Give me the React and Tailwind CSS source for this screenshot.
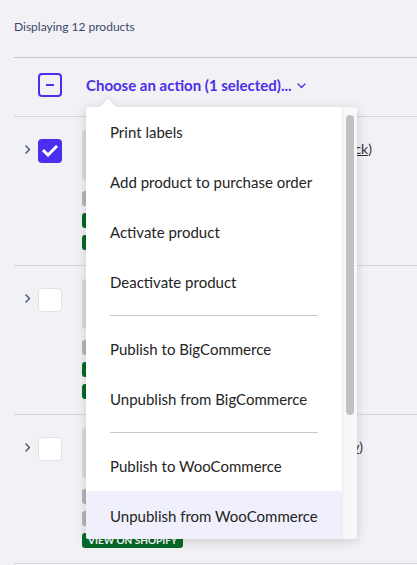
import React from "react";

const Chevron = () => (
  <svg width="6" height="9" viewBox="0 0 6 9" fill="none">
    <path d="M1 1l3.5 3.5L1 8" stroke="#3c4f74" strokeWidth="1.4" strokeLinecap="round" strokeLinejoin="round" />
  </svg>
);

const Box = ({ checked }) =>
  checked ? (
    <div className="w-[24px] h-[24px] rounded-[4px] bg-[#4b2ff0] flex items-center justify-center">
      <svg width="16" height="12" viewBox="0 0 16 12" fill="none">
        <path d="M2 6.2l4 3.8L14 2" stroke="#fff" strokeWidth="3" strokeLinecap="square" />
      </svg>
    </div>
  ) : (
    <div className="w-[24px] h-[24px] rounded-[4px] bg-white border border-[#e2e1e6]" />
  );

const Badge = ({ green, children }) => (
  <span
    className={
      "inline-block rounded-[3px] px-[6px] h-[15px] leading-[15px] text-[10px] font-bold text-white uppercase whitespace-nowrap " +
      (green ? "bg-[#066a27]" : "bg-[#b6b5b9]")
    }
  >
    {children}
  </span>
);

const Row = ({ checked, title, titleW, badges }) => (
  <div className="border-t border-[#d6d5da] h-[149px] flex">
    <div className="w-[24px] pl-[11px] pt-[28px]">
      <Chevron />
    </div>
    <div className="w-[24px] pt-[22px]">
      <Box checked={checked} />
    </div>
    <div className="ml-[20px] pt-[13px] flex flex-col">
      <div className="flex items-start">
        <div className="w-[50px] h-[50px] rounded-[4px] bg-[#dcdbe0]" />
        <div className={"ml-[10px] mt-[8px] text-[14px] text-[#333] text-right whitespace-nowrap " + titleW}>
          {title}
        </div>
      </div>
      <div className="mt-[11px] flex flex-col items-start gap-[7px]">
        {badges.map((b, i) => (
          <Badge key={i} green={b.green}>
            {b.label}
          </Badge>
        ))}
      </div>
    </div>
  </div>
);

const Item = ({ children, active }) => (
  <div
    className={
      "h-[50px] shrink-0 flex items-center pl-[24px] text-[15px] text-[#242424] " +
      (active ? "bg-[#f0f0fc] rounded-[4px]" : "")
    }
  >
    {children}
  </div>
);

const Divider = () => (
  <div className="h-[17px] shrink-0 flex items-center px-[24px]">
    <div className="h-px w-full bg-[#c9c9cc]" />
  </div>
);

export default function App() {
  return (
    <div className="relative h-[565px] overflow-hidden bg-[#f2f1f5] font-['Lato',sans-serif]">
      <div className="pl-[14px]">
        <p className="pt-[20px] h-[57px] text-[12px] leading-[14px] text-[#3a4a6a]">Displaying 12 products</p>
        <div className="border-t border-[#c6c5ca] h-[59px] pb-[4px] flex items-center">
          <div className="ml-[24px] w-[24px] h-[24px] rounded-[4px] border-2 border-[#4b2ff0] flex items-center justify-center">
            <div className="w-[8px] h-[2px] bg-[#4b2ff0]" />
          </div>
          <button className="ml-[24px] flex items-center gap-[5px] text-[15px] font-bold text-[#4b2fe8]">
            Choose an action (1 selected)...
            <svg width="9" height="6" viewBox="0 0 9 6" fill="none" className="mt-[1px]">
              <path d="M1 1l3.5 3.5L8 1" stroke="#4b2fe8" strokeWidth="1.3" strokeLinecap="round" strokeLinejoin="round" />
            </svg>
          </button>
        </div>
        <Row
          checked
          titleW="w-[230px]"
          title={
            <>
              Leather Wallet (<span className="underline">Black</span>)
            </>
          }
          badges={[
            { green: false, label: "Not on Shopify" },
            { green: true, label: "View on BigCommerce" },
            { green: true, label: "View on WooCommerce" },
          ]}
        />
        <Row
          titleW="w-[150px]"
          title={<>Canvas Tote</>}
          badges={[
            { green: false, label: "Not on Shopify" },
            { green: true, label: "View on BigCommerce" },
            { green: true, label: "View on WooCommerce" },
          ]}
        />
        <Row
          titleW="w-[221px]"
          title={
            <>
              Wool Beanie (<span className="underline">Grey</span>)
            </>
          }
          badges={[
            { green: false, label: "Not on BigCommerce" },
            { green: false, label: "Not on WooCommerce" },
            { green: true, label: "View on Shopify" },
          ]}
        />
        <div className="border-t border-[#d6d5da]" />
      </div>

      <div className="absolute left-[86px] top-[107px] w-[271px] h-[432px] bg-white rounded-[3px] shadow-[0_2px_12px_rgba(0,0,0,0.16)] flex">
        <div className="absolute left-[16px] -top-[6px] w-[12px] h-[12px] bg-white rotate-45 shadow-[-2px_-2px_4px_rgba(0,0,0,0.05)]" />
        <div className="relative w-[256px] h-full overflow-hidden flex flex-col bg-white rounded-l-[3px]">
          <Item>Print labels</Item>
          <Item>Add product to purchase order</Item>
          <Item>Activate product</Item>
          <Item>Deactivate product</Item>
          <Divider />
          <Item>Publish to BigCommerce</Item>
          <Item>Unpublish from BigCommerce</Item>
          <Divider />
          <Item>Publish to WooCommerce</Item>
          <Item active>Unpublish from WooCommerce</Item>
          <Divider />
          <Item>Publish to Shopify</Item>
          <Item>Unpublish from Shopify</Item>
        </div>
        <div className="relative w-[15px] h-full bg-[#f8f8f8] border-l border-[#ececec] rounded-r-[3px]">
          <div className="absolute left-[3px] top-[8px] w-[8px] h-[300px] rounded-full bg-[#c1c1c1]" />
        </div>
      </div>
    </div>
  );
}
